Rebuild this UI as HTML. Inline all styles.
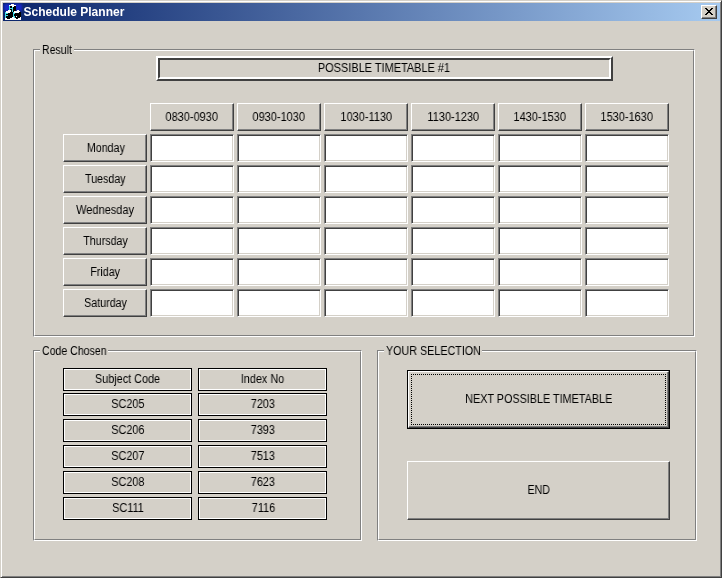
<!DOCTYPE html>
<html lang="en"><head><meta charset="utf-8"><title>Schedule Planner</title>
<style>
html,body{margin:0;padding:0;background:#d4d0c8;}
body{width:722px;height:578px;overflow:hidden;position:relative;font-family:"Liberation Sans",sans-serif;font-size:12px;}
#win{position:absolute;left:0;top:0;width:722px;height:578px;background:#d4d0c8;overflow:hidden;}
#win div{position:absolute;box-sizing:border-box;}
.t{will-change:transform;display:inline-block;white-space:nowrap;line-height:14px;transform-origin:50% 50%;}
.c{display:flex;align-items:center;justify-content:center;}
.btn{background:#d4d0c8;border:1px solid;border-color:#fff #404040 #404040 #fff;box-shadow:inset -1px -1px 0 #808080, inset 1px 1px 0 #d4d0c8;}
.tb{background:#fff;border:1px solid;border-color:#808080 #fff #fff #808080;box-shadow:inset 1px 1px 0 #404040, inset -1px -1px 0 #d4d0c8;}
.lbl{background:#d4d0c8;border:1px solid #000;box-shadow:inset 1px 1px 0 #fff, inset -1px -1px 0 #fff;}
.grp{border:1px solid;border-color:#808080 #fff #fff #808080;box-shadow:inset 1px 1px 0 #fff;}
.grpo{border:1px solid;border-color:transparent #808080 #808080 transparent;}
.gl{background:#d4d0c8;}
</style></head>
<body><div id="win">
<div class="" style="left:0px;top:0px;width:722px;height:578px;border:1px solid;border-color:#d4d0c8 #404040 #404040 #d4d0c8;box-shadow:inset 1px 1px 0 #fff, inset -1px -1px 0 #808080;"></div>
<div class="" style="left:3px;top:3px;width:717px;height:18px;background:linear-gradient(to right,#0a246a 0%,#a6caf0 100%);"></div>
<div class="" style="left:23px;top:3px;width:110px;height:18px;display:flex;align-items:center;justify-content:flex-start;"><span class="t" style="-webkit-text-stroke:0;font-size:12px;font-weight:bold;color:#fff;transform-origin:0 50%;transform:translateX(0.6px) scaleX(1.0);">Schedule Planner</span></div>
<div class="btn" style="left:701px;top:5px;width:16px;height:14px;"><svg width="8" height="7" viewBox="0 0 8 7" shape-rendering="crispEdges" style="position:absolute;left:3px;top:2px"><path d="M0 0h2v1h1v1h2v-1h1v-1h2v1h-1v1h-1v1h-1v1h1v1h1v1h1v1h-2v-1h-1v-1h-2v1h-1v1h-2v-1h1v-1h1v-1h1v-1h-1v-1h-1v-1h-1z" fill="#000"/></svg></div>
<div class="" style="left:4px;top:4px;width:18px;height:7px;background:#1626c8;filter:blur(1.1px);"></div>
<div class="" style="left:5px;top:4px;width:16px;height:16px;"><svg width="16" height="16" viewBox="0 0 16 16" shape-rendering="crispEdges" style="position:absolute;left:0;top:0"><rect x="6" y="0" width="1" height="1" fill="#ffffff"/><rect x="7" y="0" width="1" height="1" fill="#ffffff"/><rect x="8" y="0" width="1" height="1" fill="#ffffff"/><rect x="4" y="1" width="1" height="1" fill="#ffffff"/><rect x="5" y="1" width="1" height="1" fill="#ffffff"/><rect x="6" y="1" width="1" height="1" fill="#ffffff"/><rect x="7" y="1" width="1" height="1" fill="#ffffff"/><rect x="8" y="1" width="1" height="1" fill="#ffffff"/><rect x="9" y="1" width="1" height="1" fill="#ffffff"/><rect x="10" y="1" width="1" height="1" fill="#ffffff"/><rect x="4" y="2" width="1" height="1" fill="#40e0e8"/><rect x="5" y="2" width="1" height="1" fill="#000000"/><rect x="6" y="2" width="1" height="1" fill="#000000"/><rect x="7" y="2" width="1" height="1" fill="#ffffff"/><rect x="8" y="2" width="1" height="1" fill="#ffffff"/><rect x="9" y="2" width="1" height="1" fill="#000000"/><rect x="10" y="2" width="1" height="1" fill="#000000"/><rect x="4" y="3" width="1" height="1" fill="#40e0e8"/><rect x="5" y="3" width="1" height="1" fill="#000000"/><rect x="6" y="3" width="1" height="1" fill="#000000"/><rect x="7" y="3" width="1" height="1" fill="#40e0e8"/><rect x="8" y="3" width="1" height="1" fill="#000000"/><rect x="9" y="3" width="1" height="1" fill="#000000"/><rect x="10" y="3" width="1" height="1" fill="#000000"/><rect x="4" y="4" width="1" height="1" fill="#40e0e8"/><rect x="5" y="4" width="1" height="1" fill="#40e0e8"/><rect x="6" y="4" width="1" height="1" fill="#40e0e8"/><rect x="7" y="4" width="1" height="1" fill="#40e0e8"/><rect x="8" y="4" width="1" height="1" fill="#000000"/><rect x="9" y="4" width="1" height="1" fill="#000000"/><rect x="10" y="4" width="1" height="1" fill="#000000"/><rect x="4" y="5" width="1" height="1" fill="#40e0e8"/><rect x="5" y="5" width="1" height="1" fill="#000000"/><rect x="6" y="5" width="1" height="1" fill="#000000"/><rect x="7" y="5" width="1" height="1" fill="#40e0e8"/><rect x="8" y="5" width="1" height="1" fill="#000000"/><rect x="9" y="5" width="1" height="1" fill="#000000"/><rect x="10" y="5" width="1" height="1" fill="#000000"/><rect x="3" y="6" width="1" height="1" fill="#ffffff"/><rect x="4" y="6" width="1" height="1" fill="#ffffff"/><rect x="5" y="6" width="1" height="1" fill="#ffffff"/><rect x="6" y="6" width="1" height="1" fill="#000000"/><rect x="7" y="6" width="1" height="1" fill="#40e0e8"/><rect x="8" y="6" width="1" height="1" fill="#000000"/><rect x="9" y="6" width="1" height="1" fill="#000000"/><rect x="10" y="6" width="1" height="1" fill="#000000"/><rect x="12" y="6" width="1" height="1" fill="#ffffff"/><rect x="13" y="6" width="1" height="1" fill="#ffffff"/><rect x="1" y="7" width="1" height="1" fill="#ffffff"/><rect x="2" y="7" width="1" height="1" fill="#ffffff"/><rect x="3" y="7" width="1" height="1" fill="#ffffff"/><rect x="4" y="7" width="1" height="1" fill="#ffffff"/><rect x="5" y="7" width="1" height="1" fill="#ffffff"/><rect x="6" y="7" width="1" height="1" fill="#000000"/><rect x="7" y="7" width="1" height="1" fill="#40e0e8"/><rect x="8" y="7" width="1" height="1" fill="#000000"/><rect x="9" y="7" width="1" height="1" fill="#ffffff"/><rect x="10" y="7" width="1" height="1" fill="#ffffff"/><rect x="11" y="7" width="1" height="1" fill="#ffffff"/><rect x="12" y="7" width="1" height="1" fill="#ffffff"/><rect x="13" y="7" width="1" height="1" fill="#ffffff"/><rect x="14" y="7" width="1" height="1" fill="#ffffff"/><rect x="0" y="8" width="1" height="1" fill="#40e0e8"/><rect x="1" y="8" width="1" height="1" fill="#ffffff"/><rect x="2" y="8" width="1" height="1" fill="#ffffff"/><rect x="3" y="8" width="1" height="1" fill="#ffffff"/><rect x="4" y="8" width="1" height="1" fill="#ffffff"/><rect x="5" y="8" width="1" height="1" fill="#000000"/><rect x="6" y="8" width="1" height="1" fill="#000000"/><rect x="7" y="8" width="1" height="1" fill="#000000"/><rect x="8" y="8" width="1" height="1" fill="#40e0e8"/><rect x="9" y="8" width="1" height="1" fill="#ffffff"/><rect x="10" y="8" width="1" height="1" fill="#ffffff"/><rect x="11" y="8" width="1" height="1" fill="#ffffff"/><rect x="12" y="8" width="1" height="1" fill="#ffffff"/><rect x="13" y="8" width="1" height="1" fill="#ffffff"/><rect x="14" y="8" width="1" height="1" fill="#000000"/><rect x="15" y="8" width="1" height="1" fill="#000000"/><rect x="0" y="9" width="1" height="1" fill="#40e0e8"/><rect x="1" y="9" width="1" height="1" fill="#40e0e8"/><rect x="2" y="9" width="1" height="1" fill="#40e0e8"/><rect x="3" y="9" width="1" height="1" fill="#000000"/><rect x="4" y="9" width="1" height="1" fill="#000000"/><rect x="5" y="9" width="1" height="1" fill="#000000"/><rect x="6" y="9" width="1" height="1" fill="#000000"/><rect x="7" y="9" width="1" height="1" fill="#000000"/><rect x="8" y="9" width="1" height="1" fill="#40e0e8"/><rect x="9" y="9" width="1" height="1" fill="#40e0e8"/><rect x="10" y="9" width="1" height="1" fill="#000000"/><rect x="11" y="9" width="1" height="1" fill="#000000"/><rect x="12" y="9" width="1" height="1" fill="#000000"/><rect x="13" y="9" width="1" height="1" fill="#000000"/><rect x="14" y="9" width="1" height="1" fill="#000000"/><rect x="15" y="9" width="1" height="1" fill="#000000"/><rect x="0" y="10" width="1" height="1" fill="#40e0e8"/><rect x="1" y="10" width="1" height="1" fill="#000000"/><rect x="2" y="10" width="1" height="1" fill="#000000"/><rect x="3" y="10" width="1" height="1" fill="#000000"/><rect x="4" y="10" width="1" height="1" fill="#000000"/><rect x="5" y="10" width="1" height="1" fill="#000000"/><rect x="6" y="10" width="1" height="1" fill="#000000"/><rect x="7" y="10" width="1" height="1" fill="#000000"/><rect x="8" y="10" width="1" height="1" fill="#40e0e8"/><rect x="9" y="10" width="1" height="1" fill="#000000"/><rect x="10" y="10" width="1" height="1" fill="#000000"/><rect x="11" y="10" width="1" height="1" fill="#000000"/><rect x="12" y="10" width="1" height="1" fill="#000000"/><rect x="13" y="10" width="1" height="1" fill="#000000"/><rect x="14" y="10" width="1" height="1" fill="#000000"/><rect x="15" y="10" width="1" height="1" fill="#000000"/><rect x="0" y="11" width="1" height="1" fill="#40e0e8"/><rect x="1" y="11" width="1" height="1" fill="#40e0e8"/><rect x="2" y="11" width="1" height="1" fill="#40e0e8"/><rect x="3" y="11" width="1" height="1" fill="#000000"/><rect x="4" y="11" width="1" height="1" fill="#000000"/><rect x="5" y="11" width="1" height="1" fill="#000000"/><rect x="6" y="11" width="1" height="1" fill="#000000"/><rect x="7" y="11" width="1" height="1" fill="#000000"/><rect x="8" y="11" width="1" height="1" fill="#40e0e8"/><rect x="9" y="11" width="1" height="1" fill="#000000"/><rect x="10" y="11" width="1" height="1" fill="#000000"/><rect x="11" y="11" width="1" height="1" fill="#000000"/><rect x="12" y="11" width="1" height="1" fill="#000000"/><rect x="13" y="11" width="1" height="1" fill="#000000"/><rect x="14" y="11" width="1" height="1" fill="#000000"/><rect x="15" y="11" width="1" height="1" fill="#000000"/><rect x="0" y="12" width="1" height="1" fill="#40e0e8"/><rect x="1" y="12" width="1" height="1" fill="#000000"/><rect x="2" y="12" width="1" height="1" fill="#000000"/><rect x="3" y="12" width="1" height="1" fill="#000000"/><rect x="4" y="12" width="1" height="1" fill="#000000"/><rect x="5" y="12" width="1" height="1" fill="#000000"/><rect x="6" y="12" width="1" height="1" fill="#000000"/><rect x="7" y="12" width="1" height="1" fill="#000000"/><rect x="8" y="12" width="1" height="1" fill="#40e0e8"/><rect x="9" y="12" width="1" height="1" fill="#40e0e8"/><rect x="10" y="12" width="1" height="1" fill="#000000"/><rect x="11" y="12" width="1" height="1" fill="#ffffff"/><rect x="12" y="12" width="1" height="1" fill="#000000"/><rect x="13" y="12" width="1" height="1" fill="#000000"/><rect x="14" y="12" width="1" height="1" fill="#000000"/><rect x="15" y="12" width="1" height="1" fill="#000000"/><rect x="0" y="13" width="1" height="1" fill="#40e0e8"/><rect x="1" y="13" width="1" height="1" fill="#000000"/><rect x="2" y="13" width="1" height="1" fill="#000000"/><rect x="3" y="13" width="1" height="1" fill="#000000"/><rect x="4" y="13" width="1" height="1" fill="#000000"/><rect x="5" y="13" width="1" height="1" fill="#000000"/><rect x="6" y="13" width="1" height="1" fill="#000000"/><rect x="7" y="13" width="1" height="1" fill="#ffffff"/><rect x="8" y="13" width="1" height="1" fill="#ffffff"/><rect x="9" y="13" width="1" height="1" fill="#40e0e8"/><rect x="10" y="13" width="1" height="1" fill="#000000"/><rect x="11" y="13" width="1" height="1" fill="#000000"/><rect x="12" y="13" width="1" height="1" fill="#000000"/><rect x="13" y="13" width="1" height="1" fill="#000000"/><rect x="14" y="13" width="1" height="1" fill="#000000"/><rect x="15" y="13" width="1" height="1" fill="#ffffff"/><rect x="0" y="14" width="1" height="1" fill="#ffffff"/><rect x="1" y="14" width="1" height="1" fill="#ffffff"/><rect x="2" y="14" width="1" height="1" fill="#000000"/><rect x="3" y="14" width="1" height="1" fill="#000000"/><rect x="4" y="14" width="1" height="1" fill="#000000"/><rect x="5" y="14" width="1" height="1" fill="#ffffff"/><rect x="6" y="14" width="1" height="1" fill="#ffffff"/><rect x="7" y="14" width="1" height="1" fill="#ffffff"/><rect x="8" y="14" width="1" height="1" fill="#ffffff"/><rect x="9" y="14" width="1" height="1" fill="#ffffff"/><rect x="10" y="14" width="1" height="1" fill="#ffffff"/><rect x="11" y="14" width="1" height="1" fill="#000000"/><rect x="12" y="14" width="1" height="1" fill="#000000"/><rect x="13" y="14" width="1" height="1" fill="#ffffff"/><rect x="14" y="14" width="1" height="1" fill="#ffffff"/><rect x="15" y="14" width="1" height="1" fill="#ffffff"/><rect x="0" y="15" width="1" height="1" fill="#ffffff"/><rect x="1" y="15" width="1" height="1" fill="#ffffff"/><rect x="2" y="15" width="1" height="1" fill="#ffffff"/><rect x="3" y="15" width="1" height="1" fill="#ffffff"/><rect x="4" y="15" width="1" height="1" fill="#ffffff"/><rect x="5" y="15" width="1" height="1" fill="#ffffff"/><rect x="6" y="15" width="1" height="1" fill="#ffffff"/><rect x="7" y="15" width="1" height="1" fill="#ffffff"/><rect x="8" y="15" width="1" height="1" fill="#ffffff"/><rect x="9" y="15" width="1" height="1" fill="#ffffff"/><rect x="10" y="15" width="1" height="1" fill="#ffffff"/><rect x="11" y="15" width="1" height="1" fill="#ffffff"/><rect x="12" y="15" width="1" height="1" fill="#ffffff"/><rect x="13" y="15" width="1" height="1" fill="#ffffff"/><rect x="14" y="15" width="1" height="1" fill="#ffffff"/><rect x="15" y="15" width="1" height="1" fill="#ffffff"/></svg></div>
<div class="" style="left:33px;top:49px;width:662px;height:288px;border:1px solid;border-color:#808080 #fff #fff #808080;"></div>
<div class="" style="left:34px;top:50px;width:660px;height:286px;border:1px solid;border-color:#fff #808080 #808080 #fff;"></div>
<div class="" style="left:40px;top:42px;width:34px;height:16px;background:#d4d0c8;display:flex;align-items:center;justify-content:flex-start;padding-left:2px;"><span class="t" style="transform-origin:0 50%;transform:scaleX(0.88);">Result</span></div>
<div class="" style="left:33px;top:350px;width:329px;height:191px;border:1px solid;border-color:#808080 #fff #fff #808080;"></div>
<div class="" style="left:34px;top:351px;width:327px;height:189px;border:1px solid;border-color:#fff #808080 #808080 #fff;"></div>
<div class="" style="left:40px;top:343px;width:68px;height:16px;background:#d4d0c8;display:flex;align-items:center;justify-content:flex-start;padding-left:2px;"><span class="t" style="transform-origin:0 50%;transform:scaleX(0.88);">Code Chosen</span></div>
<div class="" style="left:377px;top:350px;width:320px;height:191px;border:1px solid;border-color:#808080 #fff #fff #808080;"></div>
<div class="" style="left:378px;top:351px;width:318px;height:189px;border:1px solid;border-color:#fff #808080 #808080 #fff;"></div>
<div class="" style="left:384px;top:343px;width:98px;height:16px;background:#d4d0c8;display:flex;align-items:center;justify-content:flex-start;padding-left:1.8px;"><span class="t" style="transform-origin:0 50%;transform:scaleX(0.895);">YOUR SELECTION</span></div>
<div class="" style="left:156px;top:56px;width:457px;height:25px;border:2px solid;border-color:#fff #404040 #404040 #fff;"></div>
<div class="c" style="left:158px;top:58px;width:453px;height:21px;border:2px solid;border-color:#404040 #fff #fff #404040;"><span class="t" style="font-size:12px;transform:translate(-0.5px,-1px) scaleX(0.912);color:#000;">POSSIBLE TIMETABLE #1</span></div>
<div class="btn c" style="left:150px;top:103px;width:84px;height:28px;"><span class="t" style="font-size:12px;transform:translate(0px,0px) scaleX(0.915);color:#000;">0830-0930</span></div>
<div class="btn c" style="left:237px;top:103px;width:84px;height:28px;"><span class="t" style="font-size:12px;transform:translate(0px,0px) scaleX(0.915);color:#000;">0930-1030</span></div>
<div class="btn c" style="left:324px;top:103px;width:84px;height:28px;"><span class="t" style="font-size:12px;transform:translate(0px,0px) scaleX(0.915);color:#000;">1030-1130</span></div>
<div class="btn c" style="left:411px;top:103px;width:84px;height:28px;"><span class="t" style="font-size:12px;transform:translate(0px,0px) scaleX(0.915);color:#000;">1130-1230</span></div>
<div class="btn c" style="left:498px;top:103px;width:84px;height:28px;"><span class="t" style="font-size:12px;transform:translate(0px,0px) scaleX(0.915);color:#000;">1430-1530</span></div>
<div class="btn c" style="left:585px;top:103px;width:84px;height:28px;"><span class="t" style="font-size:12px;transform:translate(0px,0px) scaleX(0.915);color:#000;">1530-1630</span></div>
<div class="btn c" style="left:63px;top:134px;width:84px;height:28px;"><span class="t" style="font-size:12px;transform:translate(0.5px,0px) scaleX(0.89);color:#000;">Monday</span></div>
<div class="tb" style="left:150px;top:134px;width:84px;height:28px;"></div>
<div class="tb" style="left:237px;top:134px;width:84px;height:28px;"></div>
<div class="tb" style="left:324px;top:134px;width:84px;height:28px;"></div>
<div class="tb" style="left:411px;top:134px;width:84px;height:28px;"></div>
<div class="tb" style="left:498px;top:134px;width:84px;height:28px;"></div>
<div class="tb" style="left:585px;top:134px;width:84px;height:28px;"></div>
<div class="btn c" style="left:63px;top:165px;width:84px;height:28px;"><span class="t" style="font-size:12px;transform:translate(0.5px,0px) scaleX(0.89);color:#000;">Tuesday</span></div>
<div class="tb" style="left:150px;top:165px;width:84px;height:28px;"></div>
<div class="tb" style="left:237px;top:165px;width:84px;height:28px;"></div>
<div class="tb" style="left:324px;top:165px;width:84px;height:28px;"></div>
<div class="tb" style="left:411px;top:165px;width:84px;height:28px;"></div>
<div class="tb" style="left:498px;top:165px;width:84px;height:28px;"></div>
<div class="tb" style="left:585px;top:165px;width:84px;height:28px;"></div>
<div class="btn c" style="left:63px;top:196px;width:84px;height:28px;"><span class="t" style="font-size:12px;transform:translate(0.5px,0px) scaleX(0.915);color:#000;">Wednesday</span></div>
<div class="tb" style="left:150px;top:196px;width:84px;height:28px;"></div>
<div class="tb" style="left:237px;top:196px;width:84px;height:28px;"></div>
<div class="tb" style="left:324px;top:196px;width:84px;height:28px;"></div>
<div class="tb" style="left:411px;top:196px;width:84px;height:28px;"></div>
<div class="tb" style="left:498px;top:196px;width:84px;height:28px;"></div>
<div class="tb" style="left:585px;top:196px;width:84px;height:28px;"></div>
<div class="btn c" style="left:63px;top:227px;width:84px;height:28px;"><span class="t" style="font-size:12px;transform:translate(0.5px,0px) scaleX(0.89);color:#000;">Thursday</span></div>
<div class="tb" style="left:150px;top:227px;width:84px;height:28px;"></div>
<div class="tb" style="left:237px;top:227px;width:84px;height:28px;"></div>
<div class="tb" style="left:324px;top:227px;width:84px;height:28px;"></div>
<div class="tb" style="left:411px;top:227px;width:84px;height:28px;"></div>
<div class="tb" style="left:498px;top:227px;width:84px;height:28px;"></div>
<div class="tb" style="left:585px;top:227px;width:84px;height:28px;"></div>
<div class="btn c" style="left:63px;top:258px;width:84px;height:28px;"><span class="t" style="font-size:12px;transform:translate(0.5px,0px) scaleX(0.89);color:#000;">Friday</span></div>
<div class="tb" style="left:150px;top:258px;width:84px;height:28px;"></div>
<div class="tb" style="left:237px;top:258px;width:84px;height:28px;"></div>
<div class="tb" style="left:324px;top:258px;width:84px;height:28px;"></div>
<div class="tb" style="left:411px;top:258px;width:84px;height:28px;"></div>
<div class="tb" style="left:498px;top:258px;width:84px;height:28px;"></div>
<div class="tb" style="left:585px;top:258px;width:84px;height:28px;"></div>
<div class="btn c" style="left:63px;top:289px;width:84px;height:28px;"><span class="t" style="font-size:12px;transform:translate(0.5px,0px) scaleX(0.89);color:#000;">Saturday</span></div>
<div class="tb" style="left:150px;top:289px;width:84px;height:28px;"></div>
<div class="tb" style="left:237px;top:289px;width:84px;height:28px;"></div>
<div class="tb" style="left:324px;top:289px;width:84px;height:28px;"></div>
<div class="tb" style="left:411px;top:289px;width:84px;height:28px;"></div>
<div class="tb" style="left:498px;top:289px;width:84px;height:28px;"></div>
<div class="tb" style="left:585px;top:289px;width:84px;height:28px;"></div>
<div class="lbl c" style="left:63px;top:368px;width:129px;height:23px;"><span class="t" style="font-size:12px;transform:translate(0.5px,-1px) scaleX(0.905);color:#000;">Subject Code</span></div>
<div class="lbl c" style="left:198px;top:368px;width:129px;height:23px;"><span class="t" style="font-size:12px;transform:translate(0.5px,-1px) scaleX(0.905);color:#000;">Index No</span></div>
<div class="lbl c" style="left:63px;top:393px;width:129px;height:23px;"><span class="t" style="font-size:12px;transform:translate(0.5px,-1px) scaleX(0.905);color:#000;">SC205</span></div>
<div class="lbl c" style="left:198px;top:393px;width:129px;height:23px;"><span class="t" style="font-size:12px;transform:translate(0.5px,-1px) scaleX(0.905);color:#000;">7203</span></div>
<div class="lbl c" style="left:63px;top:419px;width:129px;height:23px;"><span class="t" style="font-size:12px;transform:translate(0.5px,-1px) scaleX(0.905);color:#000;">SC206</span></div>
<div class="lbl c" style="left:198px;top:419px;width:129px;height:23px;"><span class="t" style="font-size:12px;transform:translate(0.5px,-1px) scaleX(0.905);color:#000;">7393</span></div>
<div class="lbl c" style="left:63px;top:445px;width:129px;height:23px;"><span class="t" style="font-size:12px;transform:translate(0.5px,-1px) scaleX(0.905);color:#000;">SC207</span></div>
<div class="lbl c" style="left:198px;top:445px;width:129px;height:23px;"><span class="t" style="font-size:12px;transform:translate(0.5px,-1px) scaleX(0.905);color:#000;">7513</span></div>
<div class="lbl c" style="left:63px;top:471px;width:129px;height:23px;"><span class="t" style="font-size:12px;transform:translate(0.5px,-1px) scaleX(0.905);color:#000;">SC208</span></div>
<div class="lbl c" style="left:198px;top:471px;width:129px;height:23px;"><span class="t" style="font-size:12px;transform:translate(0.5px,-1px) scaleX(0.905);color:#000;">7623</span></div>
<div class="lbl c" style="left:63px;top:497px;width:129px;height:23px;"><span class="t" style="font-size:12px;transform:translate(0.5px,-1px) scaleX(0.905);color:#000;">SC111</span></div>
<div class="lbl c" style="left:198px;top:497px;width:129px;height:23px;"><span class="t" style="font-size:12px;transform:translate(0.5px,-1px) scaleX(0.905);color:#000;">7116</span></div>
<div class="" style="left:407px;top:370px;width:263px;height:59px;background:#d4d0c8;border:1px solid #000;"></div>
<div class="btn c" style="left:408px;top:371px;width:261px;height:57px;"><span class="t" style="font-size:12px;transform:translate(0px,-1px) scaleX(0.9);color:#000;">NEXT POSSIBLE TIMETABLE</span></div>
<div class="" style="left:411px;top:374px;width:255px;height:51px;border:1px dotted #000;"></div>
<div class="btn c" style="left:407px;top:461px;width:263px;height:59px;"><span class="t" style="font-size:12px;transform:translate(0px,-1px) scaleX(0.88);color:#000;">END</span></div>
</div></body></html>
